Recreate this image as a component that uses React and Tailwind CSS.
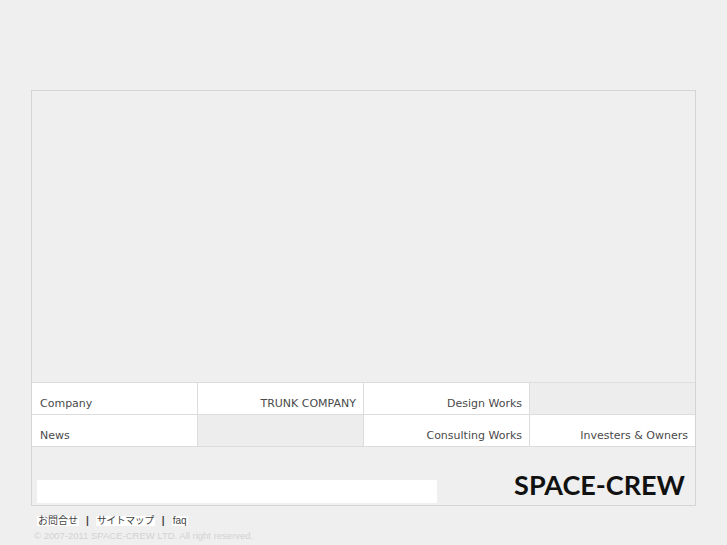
import React from 'react'

const cellFont = { fontFamily: '"DejaVu Sans", "Liberation Sans", sans-serif' }

const Cell = ({ label, align = 'right', white = true }) => (
  <div
    className={`flex items-end pb-[2px] text-[11px] text-[#4a4a4a] ${white ? 'bg-white' : 'bg-[#ededed]'} ${
      align === 'left' ? 'justify-start pl-[8px]' : 'justify-end pr-[7px]'
    }`}
    style={cellFont}
  >
    {label}
  </div>
)

export default function App() {
  return (
    <div className="min-h-[545px] w-[727px] bg-[#efefef] pt-[90px] pl-[31px]">
      {/* Main box */}
      <div className="w-[665px] h-[416px] border border-[#d4d4d4] bg-[#efefef] flex flex-col">
        <div className="h-[291px]" />

        {/* Nav grid */}
        <div className="grid grid-cols-[165px_165px_165px_1fr] grid-rows-[31px_31px] gap-px bg-[#dcdcdc] border-y border-[#dcdcdc]">
          <Cell label="Company" align="left" />
          <Cell label="TRUNK COMPANY" />
          <Cell label="Design Works" />
          <Cell label="" white={false} />
          <Cell label="News" align="left" />
          <Cell label="" white={false} />
          <Cell label="Consulting Works" />
          <Cell label="Investers & Owners" />
        </div>

        {/* Bottom bar */}
        <div className="flex-1 flex items-end justify-between pl-[5px] pr-[10px] pb-[2px]">
          <div className="w-[400px] h-[23px] bg-white" />
          <div
            className="text-[27px] font-bold leading-none text-[#111] pb-[5px]"
            style={{ fontFamily: 'Lato, "Open Sans", sans-serif' }}
          >
            SPACE-CREW
          </div>
        </div>
      </div>

      {/* Footer links */}
      <div
        className="flex items-center gap-[7px] mt-[10px] pl-[6px] text-[10px] text-[#444] leading-none"
        style={{ fontFamily: '"Liberation Sans", "Noto Sans CJK JP", sans-serif' }}
      >
        <span className="bg-white px-[1px]">お問合せ</span>
        <span className="font-bold">|</span>
        <span className="bg-white px-[1px] tracking-[-0.5px]">サイトマップ</span>
        <span className="font-bold">|</span>
        <span className="bg-white px-[1px]">faq</span>
      </div>
      <div
        className="mt-[5px] pl-[3px] text-[9.5px] text-[#d2d2d2] leading-none"
        style={{ fontFamily: '"Liberation Sans", sans-serif' }}
      >
        © 2007-2011 SPACE-CREW LTD. All right reserved.
      </div>
    </div>
  )
}
